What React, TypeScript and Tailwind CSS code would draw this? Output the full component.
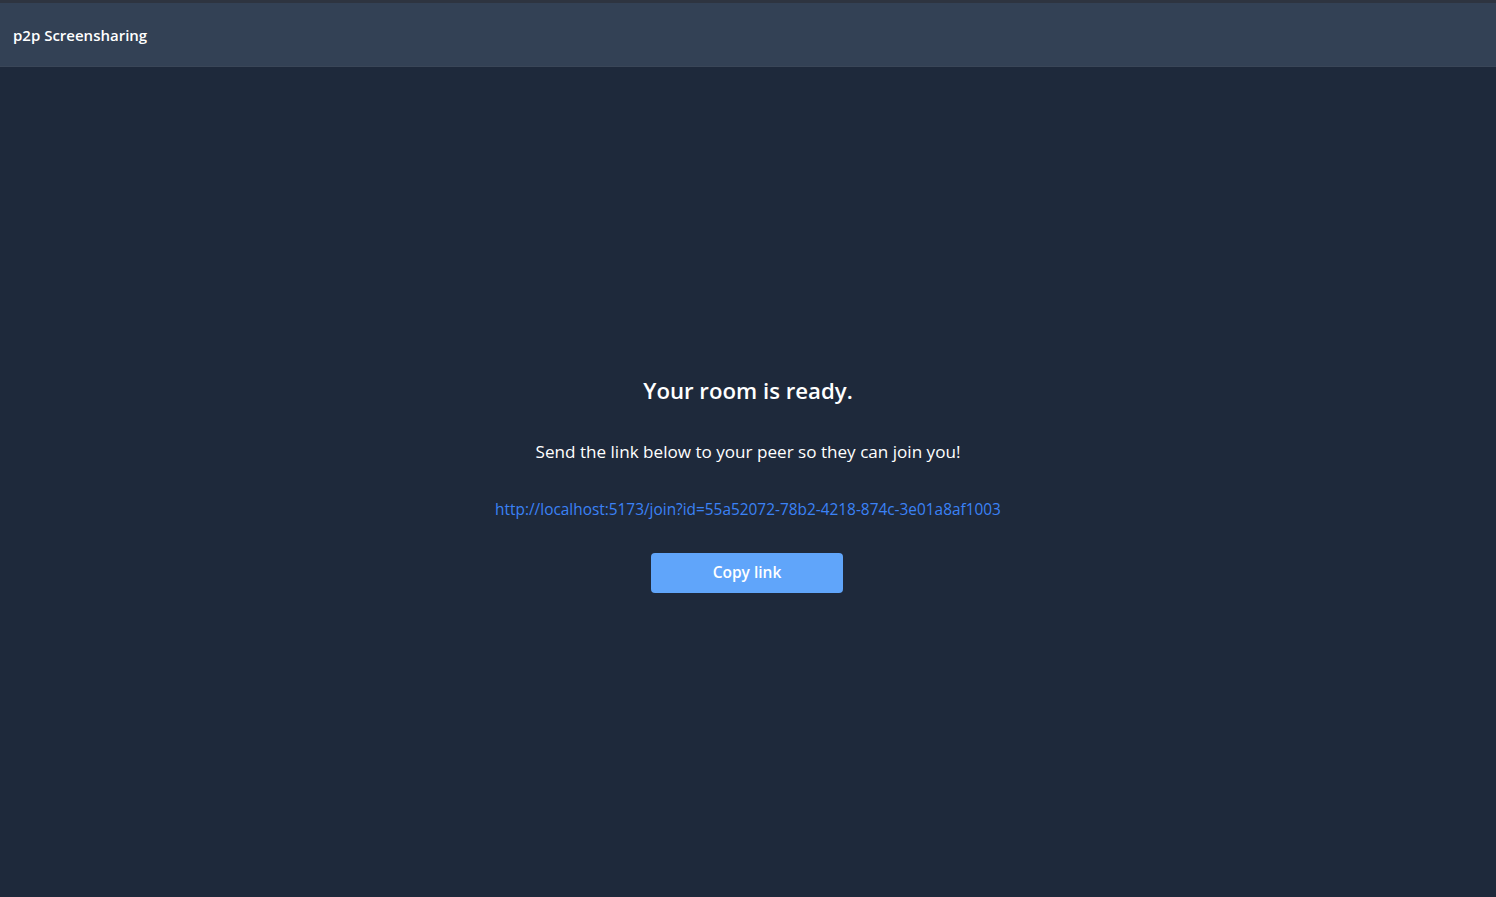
export default function App() {
  return (
    <div className="min-h-screen flex flex-col bg-[#1e293b] text-white" style={{ fontFamily: '"Open Sans", "Noto Sans", sans-serif' }}>
      <div className="h-[3px] bg-[#2e3440]" />
      <header className="h-16 bg-[#334155] flex items-center px-[13px] border-b border-[#3a4658]">
        <span className="text-[15px] leading-6 font-semibold text-white">p2p Screensharing</span>
      </header>
      <main className="flex-1 flex flex-col items-center justify-center gap-8 pt-[3px]">
        <h1 className="text-[22.2px] leading-8 font-semibold translate-y-px">Your room is ready.</h1>
        <p className="text-[17.1px] leading-7">Send the link below to your peer so they can join you!</p>
        <a className="text-[15.4px] leading-6 text-[#3b82f6]" href="#">http://localhost:5173/join?id=55a52072-78b2-4218-874c-3e01a8af1003</a>
        <button className="w-48 h-10 -translate-x-px -translate-y-px rounded bg-[#60a5fa] text-white font-semibold text-[15.5px]">Copy link</button>
      </main>
    </div>
  );
}
